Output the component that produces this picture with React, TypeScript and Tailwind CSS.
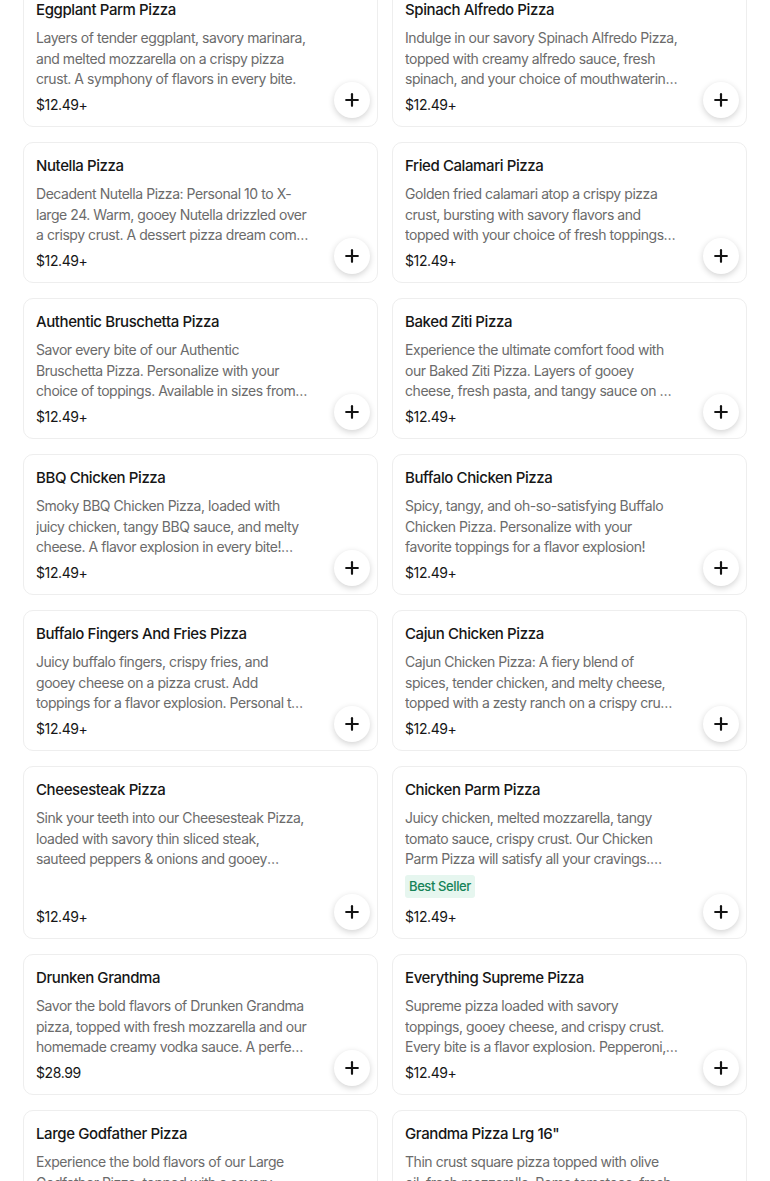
import React from 'react';
import { Plus } from 'lucide-react';

type Item = {
  name: string;
  desc: string;
  price: string;
  badge?: string;
};

const items: Item[] = [
  {
    name: 'Eggplant Parm Pizza',
    desc: 'Layers of tender eggplant, savory marinara, and melted mozzarella on a crispy pizza crust. A symphony of flavors in every bite.',
    price: '$12.49+',
  },
  {
    name: 'Spinach Alfredo Pizza',
    desc: 'Indulge in our savory Spinach Alfredo Pizza, topped with creamy alfredo sauce, fresh spinach, and your choice of mouthwatering toppings.',
    price: '$12.49+',
  },
  {
    name: 'Nutella Pizza',
    desc: 'Decadent Nutella Pizza: Personal 10 to X-large 24. Warm, gooey Nutella drizzled over a crispy crust. A dessert pizza dream come true.',
    price: '$12.49+',
  },
  {
    name: 'Fried Calamari Pizza',
    desc: 'Golden fried calamari atop a crispy pizza crust, bursting with savory flavors and topped with your choice of fresh toppings. Available in sizes.',
    price: '$12.49+',
  },
  {
    name: 'Authentic Bruschetta Pizza',
    desc: 'Savor every bite of our Authentic Bruschetta Pizza. Personalize with your choice of toppings. Available in sizes from personal to X-large.',
    price: '$12.49+',
  },
  {
    name: 'Baked Ziti Pizza',
    desc: 'Experience the ultimate comfort food with our Baked Ziti Pizza. Layers of gooey cheese, fresh pasta, and tangy sauce on a crispy crust.',
    price: '$12.49+',
  },
  {
    name: 'BBQ Chicken Pizza',
    desc: 'Smoky BBQ Chicken Pizza, loaded with juicy chicken, tangy BBQ sauce, and melty cheese. A flavor explosion in every bite! Personalize it.',
    price: '$12.49+',
  },
  {
    name: 'Buffalo Chicken Pizza',
    desc: 'Spicy, tangy, and oh-so-satisfying Buffalo Chicken Pizza. Personalize with your favorite toppings for a flavor explosion!',
    price: '$12.49+',
  },
  {
    name: 'Buffalo Fingers And Fries Pizza',
    desc: 'Juicy buffalo fingers, crispy fries, and gooey cheese on a pizza crust. Add toppings for a flavor explosion. Personal to X-large sizes.',
    price: '$12.49+',
  },
  {
    name: 'Cajun Chicken Pizza',
    desc: 'Cajun Chicken Pizza: A fiery blend of spices, tender chicken, and melty cheese, topped with a zesty ranch on a crispy crust. Perfect for spice lovers.',
    price: '$12.49+',
  },
  {
    name: 'Cheesesteak Pizza',
    desc: 'Sink your teeth into our Cheesesteak Pizza, loaded with savory thin sliced steak, sauteed peppers & onions and gooey melted cheese.',
    price: '$12.49+',
  },
  {
    name: 'Chicken Parm Pizza',
    desc: 'Juicy chicken, melted mozzarella, tangy tomato sauce, crispy crust. Our Chicken Parm Pizza will satisfy all your cravings. Order now.',
    price: '$12.49+',
    badge: 'Best Seller',
  },
  {
    name: 'Drunken Grandma',
    desc: 'Savor the bold flavors of Drunken Grandma pizza, topped with fresh mozzarella and our homemade creamy vodka sauce. A perfect treat.',
    price: '$28.99',
  },
  {
    name: 'Everything Supreme Pizza',
    desc: 'Supreme pizza loaded with savory toppings, gooey cheese, and crispy crust. Every bite is a flavor explosion. Pepperoni, sausage and more.',
    price: '$12.49+',
  },
  {
    name: 'Large Godfather Pizza',
    desc: 'Experience the bold flavors of our Large Godfather Pizza, topped with a savory blend of meats and cheese on a crispy crust.',
    price: '$12.49+',
  },
  {
    name: 'Grandma Pizza Lrg 16"',
    desc: 'Thin crust square pizza topped with olive oil, fresh mozzarella, Roma tomatoes, fresh basil and grated parmesan cheese.',
    price: '$12.49+',
  },
];

const MenuCard: React.FC<{ item: Item }> = ({ item }) => (
  <div className="relative flex flex-col rounded-[10px] border border-[#eeeeee] bg-white px-[12px] pt-[13px] pb-[11.5px]">
    <h3 className="text-[15px] leading-[20px] font-medium text-[#161616] tracking-[-0.4px]">{item.name}</h3>
    <p className="mt-[8px] w-[273px] text-[14px] leading-[20.5px] text-[#6b6b6b] line-clamp-3 tracking-[-0.45px]">
      {item.desc}
    </p>
    {item.badge && (
      <div className="mt-[5px] mb-[4px] self-start rounded-[3px] bg-[#e6f6ef] px-[4px] py-[1px] text-[13px] leading-[21px] font-medium tracking-[-0.4px] text-[#168358]">
        {item.badge}
      </div>
    )}
    <div className="mt-auto pt-[5px] text-[14px] leading-[20px] tracking-[-0.4px] text-[#161616]">{item.price}</div>
    <button className="absolute right-[7px] bottom-[8px] flex h-[36px] w-[36px] items-center justify-center rounded-full bg-white shadow-[0_2px_6px_rgba(0,0,0,0.18)]">
      <Plus size={20} strokeWidth={2.6} className="text-[#141414]" />
    </button>
  </div>
);

const App: React.FC = () => {
  return (
    <div className="min-h-screen bg-white overflow-hidden" style={{ fontFamily: 'Inter, "Noto Sans", sans-serif' }}>
      <div className="-mt-[14px] grid grid-cols-2 gap-x-[14px] gap-y-[15px] pl-[23px] pr-[23px]">
        {items.map((item) => (
          <MenuCard key={item.name} item={item} />
        ))}
      </div>
    </div>
  );
};

export default App;
